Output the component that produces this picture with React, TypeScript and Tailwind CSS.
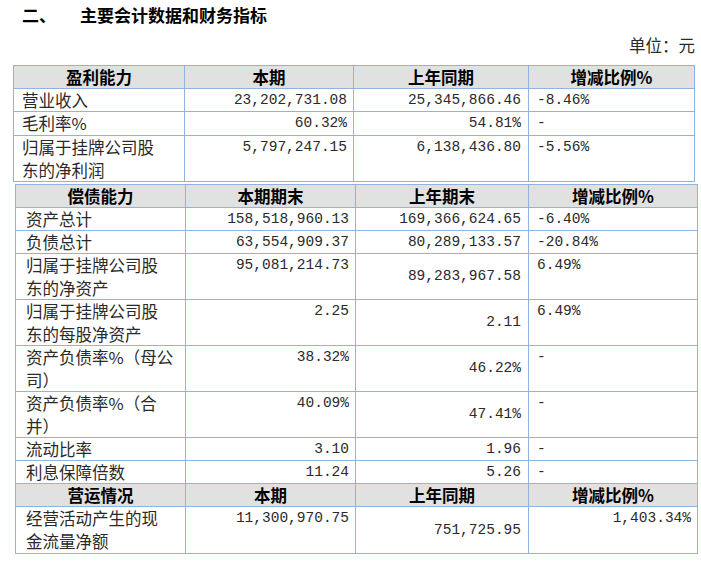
import React from "react";

type Row = {
  h: string;
  head?: boolean;
  c1: string[];
  c2?: string;
  c3?: string;
  c4?: string;
  c3center?: boolean;
  c4right?: boolean;
  c3label?: string;
  c4label?: string;
  c2label?: string;
};

const CN = "font-['Noto_Sans_CJK_SC',sans-serif]";
const NUM = "font-['Liberation_Mono','DejaVu_Sans_Mono',monospace] text-[14.5px] text-[#2a2a2a]";
const B = "border-[#8fb4e0]";

function Table({ rows, cols, width, pl }: { rows: Row[]; cols: string; width: string; pl: string }) {
  return (
    <div className={`grid ${cols} ${width} border-l border-t ${B}`}>
      {rows.map((r, i) =>
        r.head ? (
          <React.Fragment key={i}>
            {[r.c1[0], r.c2label, r.c3label, r.c4label].map((t, j) => (
              <div
                key={j}
                className={`${r.h} border-r border-b ${B} bg-[#e1e1e1] flex items-center justify-center ${CN} font-bold text-[16.5px] leading-[22px] text-black`}
              >
                {t}
              </div>
            ))}
          </React.Fragment>
        ) : (
          <React.Fragment key={i}>
            <div className={`${r.h} border-r border-b ${B} ${pl} ${CN} text-[16.5px] leading-[23px] text-[#2a2a2a] flex flex-col`}>
              {r.c1.map((l, k) => (
                <span key={k}>{l}</span>
              ))}
            </div>
            <div className={`${r.h} border-r border-b ${B} pr-[6px] flex justify-end items-start ${NUM} leading-[23px]`}>
              {r.c2}
            </div>
            <div
              className={`${r.h} border-r border-b ${B} pr-[7px] flex justify-end ${r.c3center ? "items-center" : "items-start"} ${NUM} leading-[23px]`}
            >
              {r.c3}
            </div>
            <div
              className={`${r.h} border-r border-b ${B} ${r.c4right ? "pr-[6px] justify-end" : "pl-[8px] justify-start"} flex items-start ${NUM} leading-[23px]`}
            >
              {r.c4}
            </div>
          </React.Fragment>
        )
      )}
    </div>
  );
}

export default function App() {
  const t1: Row[] = [
    { h: "h-[23px]", head: true, c1: ["盈利能力"], c2label: "本期", c3label: "上年同期", c4label: "增减比例%" },
    { h: "h-[23px]", c1: ["营业收入"], c2: "23,202,731.08", c3: "25,345,866.46", c4: "-8.46%" },
    { h: "h-[24px]", c1: ["毛利率%"], c2: "60.32%", c3: "54.81%", c4: "-" },
    { h: "h-[46px]", c1: ["归属于挂牌公司股", "东的净利润"], c2: "5,797,247.15", c3: "6,138,436.80", c4: "-5.56%" },
  ];
  const t2: Row[] = [
    { h: "h-[23px]", head: true, c1: ["偿债能力"], c2label: "本期期末", c3label: "上年期末", c4label: "增减比例%" },
    { h: "h-[23px]", c1: ["资产总计"], c2: "158,518,960.13", c3: "169,366,624.65", c4: "-6.40%" },
    { h: "h-[23px]", c1: ["负债总计"], c2: "63,554,909.37", c3: "80,289,133.57", c4: "-20.84%" },
    { h: "h-[46px]", c1: ["归属于挂牌公司股", "东的净资产"], c2: "95,081,214.73", c3: "89,283,967.58", c4: "6.49%", c3center: true },
    { h: "h-[46px]", c1: ["归属于挂牌公司股", "东的每股净资产"], c2: "2.25", c3: "2.11", c4: "6.49%", c3center: true },
    { h: "h-[46px]", c1: ["资产负债率%（母公", "司）"], c2: "38.32%", c3: "46.22%", c4: "-", c3center: true },
    { h: "h-[46px]", c1: ["资产负债率%（合", "并）"], c2: "40.09%", c3: "47.41%", c4: "-", c3center: true },
    { h: "h-[23px]", c1: ["流动比率"], c2: "3.10", c3: "1.96", c4: "-" },
    { h: "h-[23px]", c1: ["利息保障倍数"], c2: "11.24", c3: "5.26", c4: "-" },
    { h: "h-[23px]", head: true, c1: ["营运情况"], c2label: "本期", c3label: "上年同期", c4label: "增减比例%" },
    { h: "h-[47px]", c1: ["经营活动产生的现", "金流量净额"], c2: "11,300,970.75", c3: "751,725.95", c4: "1,403.34%", c3center: true, c4right: true },
  ];

  return (
    <div className="w-[701px] h-[561px] bg-white overflow-hidden flex flex-col">
      <div className={`mt-[4px] pl-[22px] flex ${CN} font-bold text-[17px] leading-[22px] text-black`}>
        <span className="w-[58px]">二、</span>
        <span>主要会计数据和财务指标</span>
      </div>
      <div className={`mt-[8px] pr-[6px] flex justify-end ${CN} text-[16.5px] leading-[22px] text-[#2a2a2a]`}>
        单位：元
      </div>
      <div className="mt-[9px] ml-[13px]">
        <Table rows={t1} cols="grid-cols-[171px_169px_175px_166px]" width="w-[682px]" pl="pl-[8px]" />
      </div>
      <div className="mt-[2px] ml-[15px]">
        <Table rows={t2} cols="grid-cols-[170px_170px_173px_169px]" width="w-[683px]" pl="pl-[10px]" />
      </div>
    </div>
  );
}
